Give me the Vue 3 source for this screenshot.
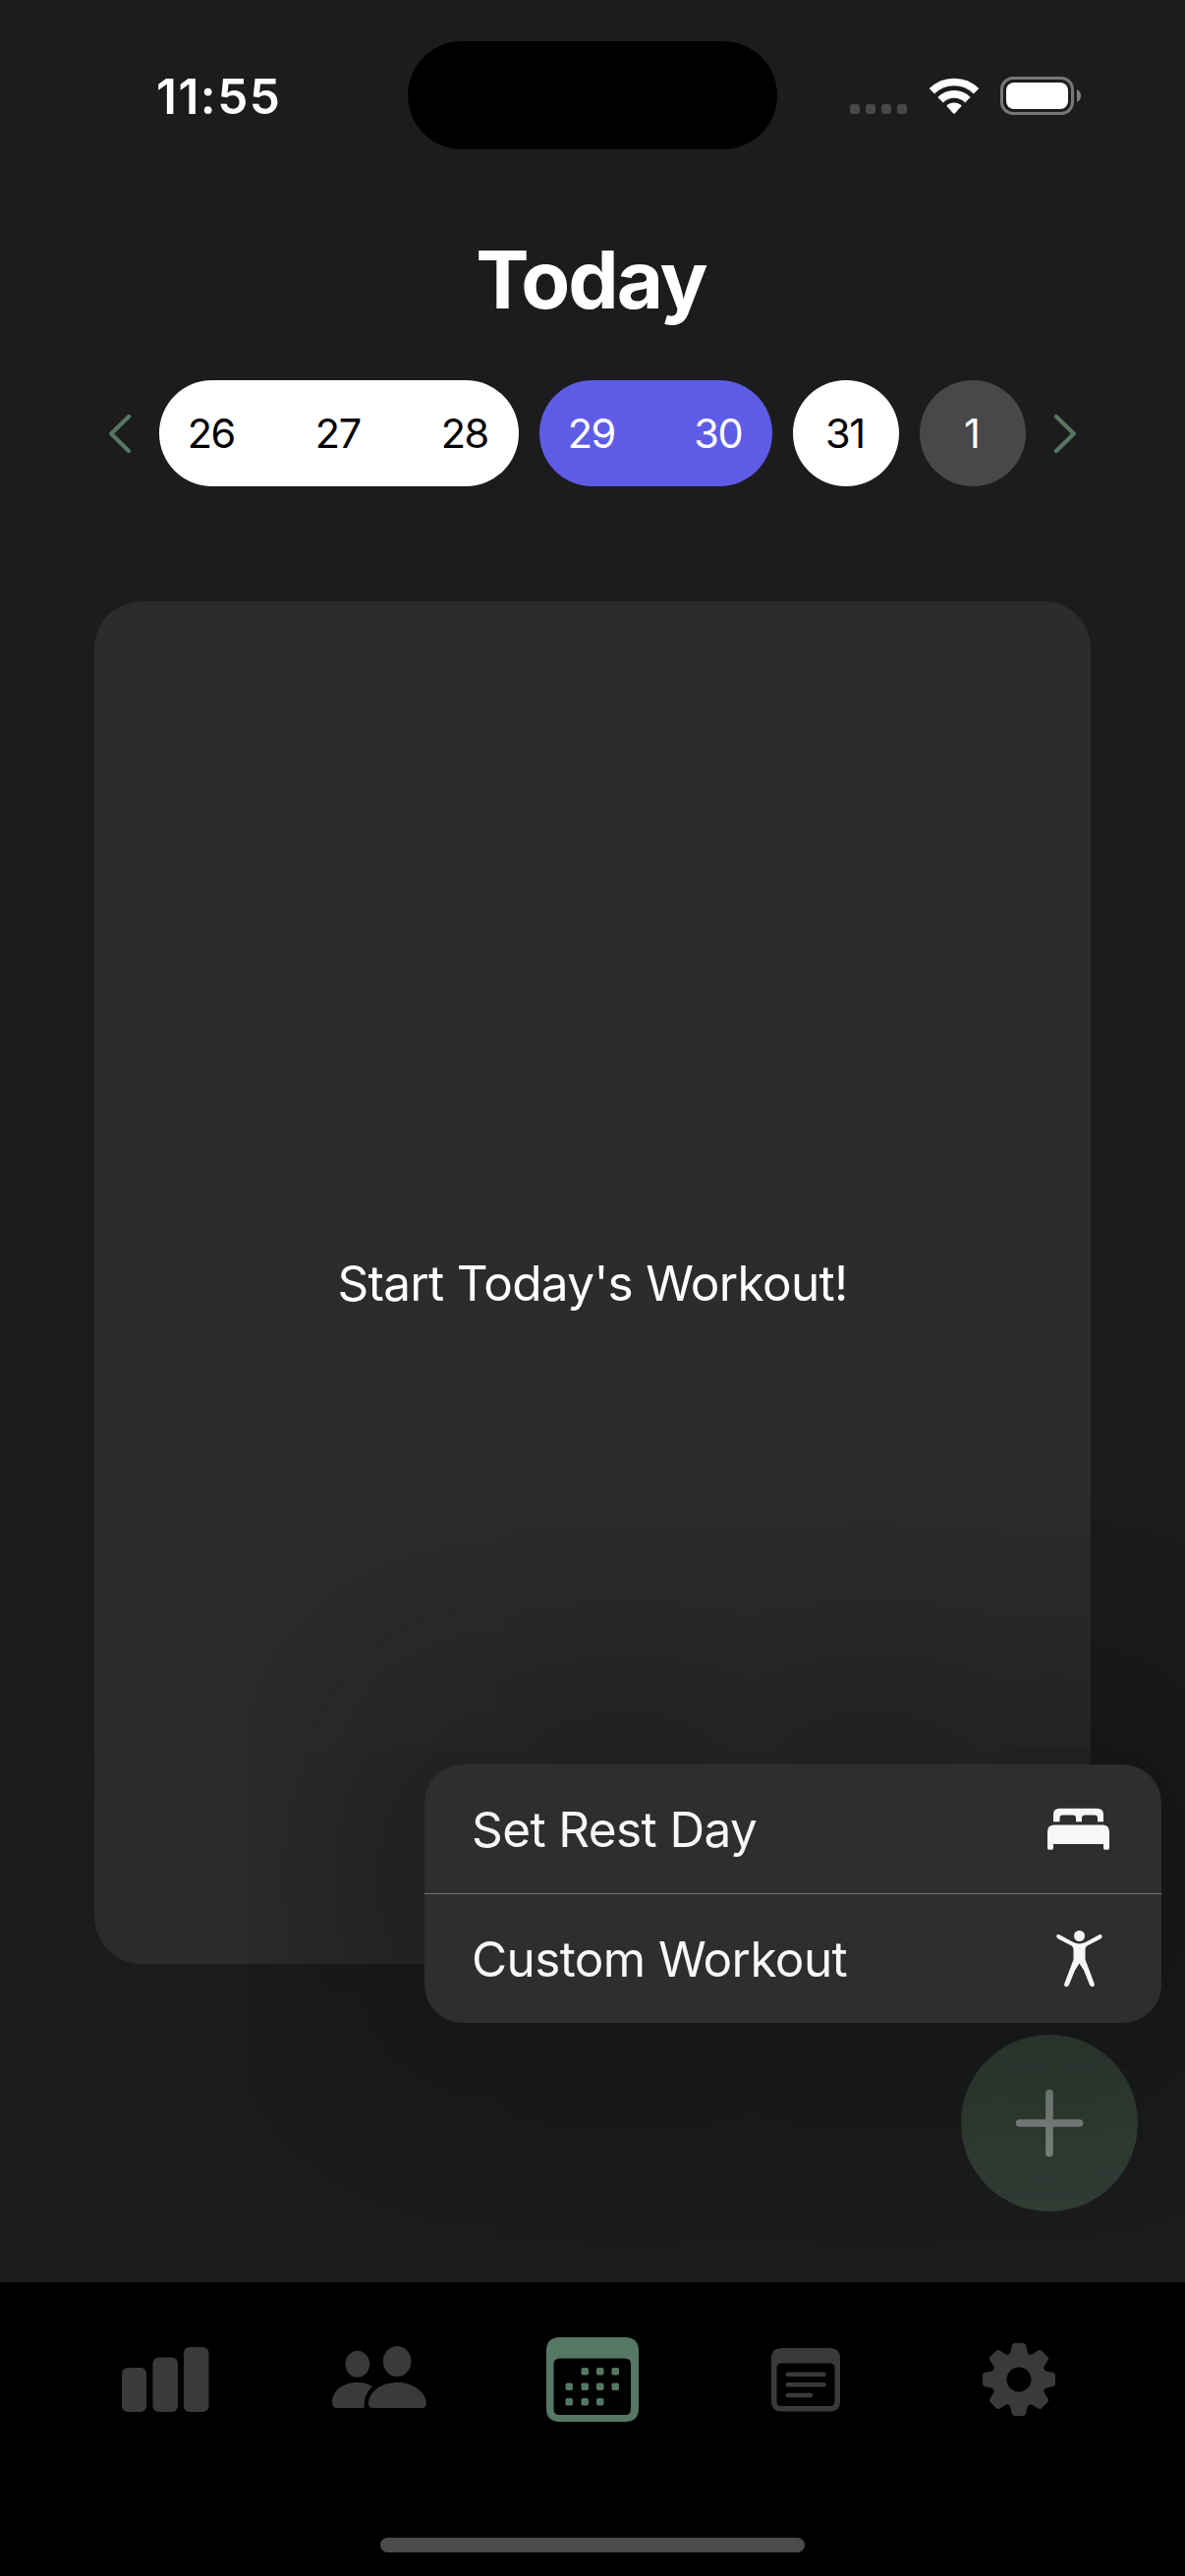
<script setup>
const groups = [
  { kind: 'done', days: [26, 27, 28] },
  { kind: 'rest', days: [29, 30] },
  { kind: 'done', days: [31] },
  { kind: 'today', days: [1] },
]
const teeth = [0, 45, 90, 135, 180, 225, 270, 315]
const calendarDots = [
  [39.5, 35], [55, 35], [70.5, 35],
  [23.5, 50.5], [39.5, 50.5], [55, 50.5], [70.5, 50.5],
  [23.5, 66], [39.5, 66], [55, 66],
]
</script>

<template>
  <div class="screen">
    <header class="status">
      <div class="time"><span>11:55</span></div>
      <div class="island"></div>
      <div class="indicators">
        <svg class="signal" width="58" height="10" viewBox="0 0 58 10">
          <rect v-for="n in 4" :key="n" :x="(n - 1) * 16" y="0" width="10" height="10" rx="3" />
        </svg>
        <svg class="wifi" width="52" height="38" viewBox="0 0 52 38">
          <g fill="none" stroke="#fff">
            <path d="M3.4 13.8A32 32 0 0 1 48.6 13.8" stroke-width="7.6" />
            <path d="M12.1 22.7A19.6 19.6 0 0 1 39.9 22.7" stroke-width="7.8" />
          </g>
          <path d="M18.8 29.2Q18.2 28.4 19 27.8Q26 23.4 33 27.8Q33.8 28.4 33.2 29.2L26.8 36.4Q26 37.2 25.2 36.4Z" fill="#fff" />
        </svg>
        <svg class="battery" width="83" height="39" viewBox="0 0 83 39">
          <rect x="1.5" y="1.5" width="72" height="36" rx="11.5" fill="none" stroke="#777778" stroke-width="3" />
          <rect x="6" y="6" width="63" height="27" rx="8" fill="#fff" />
          <path d="M78 13Q82 15 82 19.5Q82 24 78 26Z" fill="#808081" />
        </svg>
      </div>
    </header>

    <h1 class="title"><span>Today</span></h1>

    <nav class="dates">
      <svg class="chevron" width="24" height="40" viewBox="0 0 24 40">
        <path d="M21 3L3.2 20.5L21 38" />
      </svg>
      <div class="groups">
        <div v-for="(group, i) in groups" :key="i" class="group" :class="group.kind">
          <span v-for="day in group.days" :key="day" class="day">{{ day }}</span>
        </div>
      </div>
      <svg class="chevron" width="24" height="40" viewBox="0 0 24 40">
        <path d="M3 3L20.8 20.5L3 38" />
      </svg>
    </nav>

    <main class="card">
      <p class="prompt">Start Today's Workout!</p>
    </main>

    <button class="fab" aria-label="Add">
      <svg width="70" height="70" viewBox="0 0 70 70">
        <path d="M35 4.5V65.5M4.5 35H65.5" />
      </svg>
    </button>

    <div class="menu">
      <div class="item">
        <span>Set Rest Day</span>
        <svg class="bed" width="64" height="44" viewBox="0 0 64 44">
          <path d="M6 14.3V7Q6 .7 12.5 .7H50.5Q57 .7 57 7V14.3H51V10.5Q51 7.5 48 7.5H38Q35 7.5 35 10.5V14.3H29V10.5Q29 7.5 26 7.5H15.5Q12.5 7.5 12.5 10.5V14.3Z" />
          <path d="M0 24.5Q0 17.5 7 17.5H56Q63 17.5 63 24.5V41Q63 42.7 61.3 42.7H58.7Q57 42.7 57 41V37H6V41Q6 42.7 4.3 42.7H1.7Q0 42.7 0 41Z" />
        </svg>
      </div>
      <div class="item">
        <span>Custom Workout</span>
        <svg class="person" width="48" height="58" viewBox="0 0 48 58">
          <circle cx="23.5" cy="5.5" r="5.5" />
          <path d="M3.2 4.3Q.2 3.2 .2 6Q.3 7.5 2 8.4L15.5 15.5Q17.5 16.7 17.5 19V29.5L8.3 54Q7.6 57 10.2 57.3Q12.3 57.3 13.1 55L19 40.5L23.5 33.5L28 40.5L33.9 55Q34.7 57.3 36.8 57.3Q39.4 57 38.7 54L29.5 29.5V19Q29.5 16.7 31.5 15.5L45 8.4Q46.7 7.5 46.6 6Q46.5 3.2 43.8 4.3L29.5 12Q23.5 14.8 17.5 12Z" />
        </svg>
      </div>
    </div>

    <footer class="tabs">
      <div class="tab-row">
        <svg width="90" height="66" viewBox="0 0 90 66">
          <rect x="0" y="21" width="25" height="45" rx="6" />
          <rect x="31.5" y="10.5" width="25.5" height="55.5" rx="6" />
          <rect x="63" y="0" width="25.5" height="66" rx="6" />
        </svg>
        <svg width="96" height="68" viewBox="0 0 96 68">
          <ellipse cx="25.8" cy="18.2" rx="12.3" ry="13.5" />
          <ellipse cx="66.2" cy="15.5" rx="14.3" ry="15.5" />
          <path d="M5 63Q0 63 0 57.5C0 45 11.5 37 25.5 37Q34 37 41 41Q32 49 32.5 63Z" />
          <path d="M42 63Q37 63 37 57.5C38 46 50 37 66.5 37C83 37 95 47 96 58Q96 63 91 63Z" />
        </svg>
        <svg class="active" width="94" height="87" viewBox="0 0 94 87">
          <path fill-rule="evenodd" d="M14 0H80Q94 0 94 14V72.5Q94 86 80 86H14Q0 86 0 72.5V14Q0 0 14 0ZM13.5 21.5Q7.5 21.5 7.5 27.5V73Q7.5 79 13.5 79H80Q86 79 86 73V27.5Q86 21.5 80 21.5Z" />
          <rect v-for="([x, y], i) in calendarDots" :key="i" :x="x - 4" :y="y - 4" width="7.5" height="7.5" rx="1.8" />
        </svg>
        <svg width="70" height="65" viewBox="0 0 70 65">
          <path fill-rule="evenodd" d="M10.5 0H59.5Q70 0 70 10V54.5Q70 64.5 59.5 64.5H10.5Q0 64.5 0 54.5V10Q0 0 10.5 0ZM10.5 15.5Q5.5 15.5 5.5 20V54.5Q5.5 59 10.5 59H59.5Q64.5 59 64.5 54.5V20Q64.5 15.5 59.5 15.5Z" />
          <path class="lines" d="M16.7 26.7H53.5M16.7 37.3H53.5M16.7 48H40" />
        </svg>
        <svg width="74" height="74" viewBox="-37 -37 74 74">
          <circle r="20" fill="none" stroke="#3a3a3c" stroke-width="15" />
          <path v-for="angle in teeth" :key="angle" :transform="`rotate(${angle})`" d="M-11.5 -24.5Q-8.8 -26 -8.3 -29L-7.3 -34Q-6.8 -37 -4 -37H4Q6.8 -37 7.3 -34L8.3 -29Q8.8 -26 11.5 -24.5Z" />
        </svg>
      </div>
      <div class="home"></div>
    </footer>
  </div>
</template>

<style>
body {
  margin: 0;
  background: #1c1c1e;
}
</style>

<style scoped>
.screen {
  position: relative;
  display: flex;
  flex-direction: column;
  width: 1206px;
  height: 2622px;
  overflow: hidden;
  background: #1c1c1e;
  color: #fff;
  font-family: Inter, "Liberation Sans", sans-serif;
}

.status {
  display: grid;
  grid-template-columns: 415px 376px 1fr;
  height: 110px;
  padding-top: 42px;
}

.time {
  display: flex;
  align-items: center;
  padding: 2px 0 0 159px;
  font-size: 49.5px;
  font-weight: 600;
  letter-spacing: 1.5px;
}

.island {
  height: 110px;
  border-radius: 55px;
  background: #000;
}

.indicators {
  display: flex;
  align-items: flex-start;
  padding-left: 74px;
}

.signal {
  margin-top: 64px;
  fill: #48484a;
}

.wifi {
  margin: 37px 0 0 22px;
}

.battery {
  margin: 36px 0 0 21px;
}

.title {
  display: flex;
  justify-content: center;
  height: 100px;
  margin: 83px 3px 0 0;
  font-size: 81.5px;
  font-weight: 700;
  letter-spacing: -2px;
  line-height: 100px;
}

.dates {
  display: flex;
  align-items: center;
  justify-content: space-between;
  height: 108px;
  margin: 52px 110px 0;
}

.chevron {
  fill: none;
  stroke: #567763;
  stroke-width: 4.2;
  stroke-linecap: round;
  stroke-linejoin: round;
}

.groups {
  display: flex;
  gap: 21px;
}

.group {
  display: flex;
  gap: 21px;
  border-radius: 54px;
}

.day {
  width: 108px;
  font-size: 41.5px;
  letter-spacing: -1.4px;
  line-height: 108px;
  text-align: center;
  text-indent: -2.4px;
}

.done {
  background: #fff;
  color: #000;
}

.rest {
  background: #5e5ce6;
}

.today {
  background: #48484a;
}

.card {
  display: flex;
  align-items: center;
  justify-content: center;
  height: 1387px;
  margin: 117px 96px 0;
  border-radius: 48px;
  background: #2c2c2e;
}

.prompt {
  margin: 0;
  font-size: 49.5px;
  letter-spacing: -0.68px;
  line-height: 60px;
  white-space: nowrap;
}

.fab {
  position: absolute;
  top: 2071px;
  left: 978px;
  display: grid;
  place-items: center;
  width: 180px;
  height: 180px;
  padding: 0;
  border: 0;
  border-radius: 50%;
  background: #343f38;
}

.fab path {
  stroke: #838b86;
  stroke-width: 7.6;
  stroke-linecap: round;
}

.menu {
  position: absolute;
  top: 1796px;
  left: 432px;
  width: 750px;
  height: 263px;
  border-radius: 39px;
  background: #2e2e2e;
  box-shadow: 0 -15px 240px 90px rgba(2, 9, 2, 0.4);
  color: #f7f7f7;
}

.item {
  display: flex;
  align-items: center;
  justify-content: space-between;
  height: 131px;
  padding: 0 52px 0 48px;
  font-size: 49.5px;
  letter-spacing: -0.62px;
  white-space: nowrap;
}

.item + .item {
  padding-right: 59px;
  border-top: 1px solid #727372;
}

.bed,
.person {
  fill: #f7f7f7;
}

.tabs {
  position: relative;
  display: flex;
  flex-direction: column;
  align-items: center;
  justify-content: space-between;
  height: 299px;
  margin-top: auto;
  background: #000;
}

.tab-row {
  display: grid;
  grid-template-columns: repeat(5, 217px);
  place-items: center;
  height: 198px;
  fill: #3a3a3c;
}

.active {
  fill: #567763;
}

.lines {
  fill: none;
  stroke: #3a3a3c;
  stroke-width: 4.5;
  stroke-linecap: round;
}

.home {
  width: 432px;
  height: 15px;
  margin-bottom: 24px;
  border-radius: 8px;
  background: #4b4b4b;
}
</style>
